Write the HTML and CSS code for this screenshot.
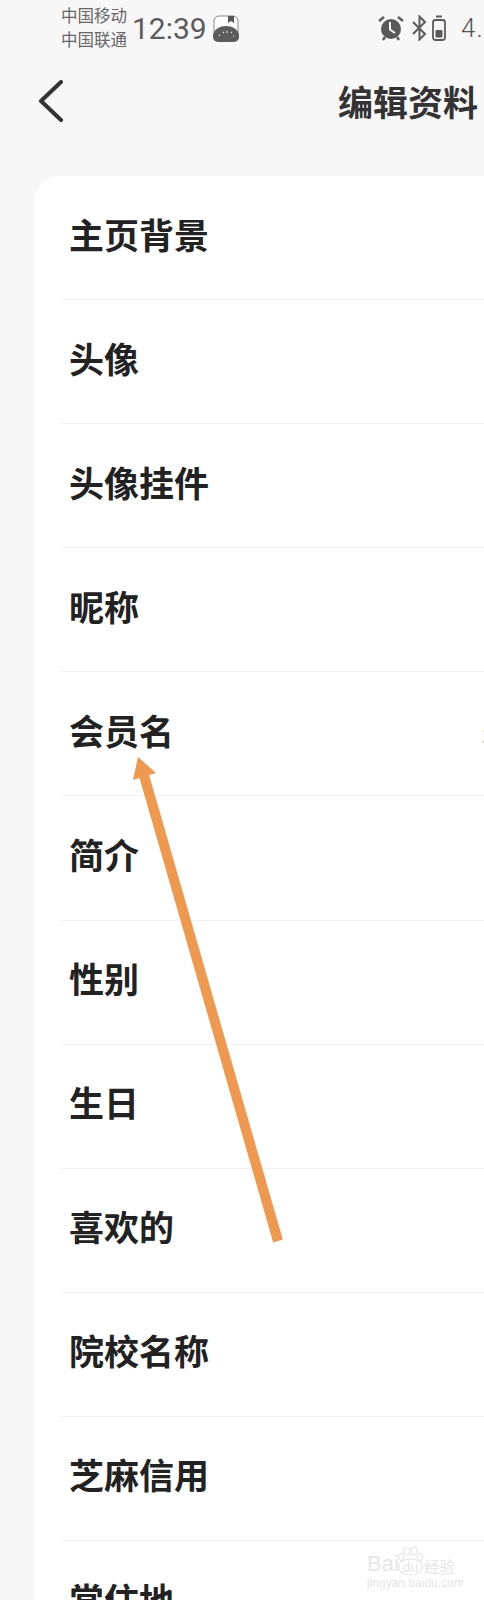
FILE: index.html
```html
<!DOCTYPE html>
<html lang="en">
<head>
    <meta charset="UTF-8">
    <meta name="viewport" content="width=device-width, initial-scale=1.0">
    <title>编辑资料</title>
    <link rel="stylesheet" href="styles.css">
</head>
<body>
    <div class="page">
        <div class="statusbar">
            <div class="carriers">
                <div>中国移动</div>
                <div>中国联通</div>
            </div>
            <div class="time">12:39</div>
            <svg class="app-icon" width="26" height="27" viewBox="0 0 26 27">
                <rect x="1" y="1" width="24" height="25" rx="5" fill="#fff" stroke="#888" stroke-width="1"/>
                <path d="M15 1h6v7l-3-2-3 2z" fill="#555"/>
                <path d="M0 20c1-6 7-9 13-9s12 3 13 9v2a5 5 0 0 1-5 5H5a5 5 0 0 1-5-5z" fill="#5c5c5c"/>
                <path d="M6 21l1-1M10 17l1 1M14 16v2M18 18l1-1M20 21h1" stroke="#ddd" stroke-width="1.200" fill="none"/>
            </svg>
            <div class="status-right">
                <svg width="26" height="26" viewBox="0 0 26 26">
                    <circle cx="13" cy="14" r="10" fill="#5a5a5a"/>
                    <path d="M1 6l5-4M25 6l-5-4" stroke="#5a5a5a" stroke-width="2.400" fill="none"/>
                    <path d="M5 25l2-3M21 25l-2-3" stroke="#5a5a5a" stroke-width="2.400" fill="none"/>
                    <path d="M12 7v7.500l5 3.500" stroke="#f7f7f7" stroke-width="2" fill="none"/>
                </svg>
                <svg class="bt" width="15" height="26" viewBox="0 0 15 26">
                    <path d="M1 7l12 12-5.500 5.500V1.500L13 7 1 19" stroke="#5a5a5a" stroke-width="2" fill="none"/>
                </svg>
                <svg class="battery" width="14" height="26" viewBox="0 0 14 26">
                    <path d="M4 1.500h6" stroke="#5a5a5a" stroke-width="2"/>
                    <rect x="1" y="5" width="12" height="20" rx="2.500" fill="none" stroke="#5a5a5a" stroke-width="1.800"/>
                    <rect x="3.500" y="15" width="7" height="7.500" rx="1" fill="#5a5a5a"/>
                </svg>
                <div class="speed">4.8</div>
            </div>
        </div>

        <div class="header">
            <svg class="back" width="26" height="42" viewBox="0 0 26 42">
                <path d="M23 2L3 21l20 19" stroke="#333" stroke-width="4" stroke-linecap="round" stroke-linejoin="round" fill="none"/>
            </svg>
            <div class="title">编辑资料</div>
        </div>

        <div class="card">
            <div class="row"><span>主页背景</span></div>
            <div class="row"><span>头像</span></div>
            <div class="row"><span>头像挂件</span></div>
            <div class="row"><span>昵称</span></div>
            <div class="row"><span>会员名</span><span class="value">未设置</span></div>
            <div class="row"><span>简介</span></div>
            <div class="row"><span>性别</span></div>
            <div class="row"><span>生日</span></div>
            <div class="row"><span>喜欢的</span></div>
            <div class="row"><span>院校名称</span></div>
            <div class="row"><span>芝麻信用</span></div>
            <div class="row"><span>常住地</span></div>
        </div>

        <svg class="arrow" width="484" height="1600" viewBox="0 0 484 1600">
            <path d="M278 1241L143 772" stroke="#ee9850" stroke-width="10" fill="none"/>
            <path d="M138 757L156 773 133 780z" fill="#ee9850"/>
        </svg>

        <div class="watermark">
            <div class="wm-top">
                <span class="wm-bai">Bai</span>
                <svg width="27" height="30" viewBox="0 0 27 30">
                    <g fill="#fff" stroke="#e6e6e6" stroke-width="1.200">
                        <ellipse cx="4" cy="11" rx="2.500" ry="3.500"/>
                        <ellipse cx="10" cy="5" rx="3" ry="4"/>
                        <ellipse cx="17" cy="5" rx="3" ry="4"/>
                        <ellipse cx="23" cy="11" rx="2.500" ry="3.500"/>
                        <ellipse cx="13.500" cy="21" rx="12" ry="8"/>
                    </g>
                    <text x="13.500" y="26" text-anchor="middle" font-family="Liberation Sans, sans-serif" font-size="14" fill="#e6e6e6">du</text>
                </svg>
                <span class="wm-cn">经验</span>
            </div>
            <div class="wm-url">jingyan.baidu.com</div>
        </div>
    </div>
</body>
</html>
```

FILE: styles.css
```css
html, body {
    margin: 0;
    padding: 0;
}

body {
    font-family: "Noto Sans CJK SC", "Liberation Sans", sans-serif;
    background: #f7f7f7;
}

.page {
    position: relative;
    width: 484px;
    height: 1600px;
    overflow: hidden;
    background: #f7f7f7;
}

.statusbar {
    display: flex;
    align-items: center;
    height: 56px;
    padding-left: 61px;
    color: #666;
}

.carriers {
    font-size: 16.500px;
    line-height: 24px;
    width: 71px;
    flex: none;
    color: #666;
    margin-top: -3px;
}

.time {
    font-family: Roboto, "Liberation Sans", sans-serif;
    font-weight: 400;
    font-size: 30px;
    color: #5c5c5c;
    width: 81px;
    flex: none;
}

.app-icon {
    flex: none;
}

.status-right {
    display: flex;
    align-items: center;
    margin-left: 139px;
    flex: none;
}

.bt {
    margin-left: 8px;
}

.battery {
    margin-left: 5px;
}

.speed {
    font-family: Roboto, "Liberation Sans", sans-serif;
    font-size: 26px;
    font-weight: 300;
    color: #555;
    margin-left: 15px;
    letter-spacing: 1px;
}

.header {
    display: flex;
    align-items: center;
    height: 90px;
    padding-left: 38px;
}

.back {
    flex: none;
}

.title {
    font-size: 35px;
    font-weight: 700;
    color: #333;
    margin-left: 274px;
    margin-top: -2px;
    white-space: nowrap;
}

.card {
    margin-top: 30px;
    margin-left: 34px;
    width: 500px;
    background: #fff;
    border-radius: 26px 0 0 0;
    padding-left: 26px;
    box-sizing: border-box;
}

.row {
    display: flex;
    align-items: center;
    height: 124.100px;
    box-sizing: border-box;
    border-bottom: 1px solid #f2f2f2;
    padding-left: 9px;
    padding-bottom: 9px;
    font-size: 35px;
    font-weight: 700;
    color: #222;
    white-space: nowrap;
}

.value {
    font-weight: 400;
    font-size: 30px;
    color: #777;
    margin-left: 308px;
}

.arrow {
    position: absolute;
    left: 0;
    top: 0;
}

.watermark {
    position: absolute;
    left: 367px;
    top: 1546px;
    width: 92px;
    color: #e6e6e6;
}

.wm-top {
    display: flex;
    align-items: flex-end;
    height: 30px;
}

.wm-top svg {
    flex: none;
}

.wm-bai {
    font-family: "Liberation Sans", sans-serif;
    font-size: 22px;
    line-height: 24px;
    width: 30px;
    flex: none;
}

.wm-cn {
    font-family: "Noto Sans CJK SC", sans-serif;
    font-size: 15.500px;
    line-height: 20px;
    white-space: nowrap;
}

.wm-url {
    font-family: "Liberation Sans", sans-serif;
    font-size: 12px;
    line-height: 14px;
    margin-top: 0;
    white-space: nowrap;
}
```
